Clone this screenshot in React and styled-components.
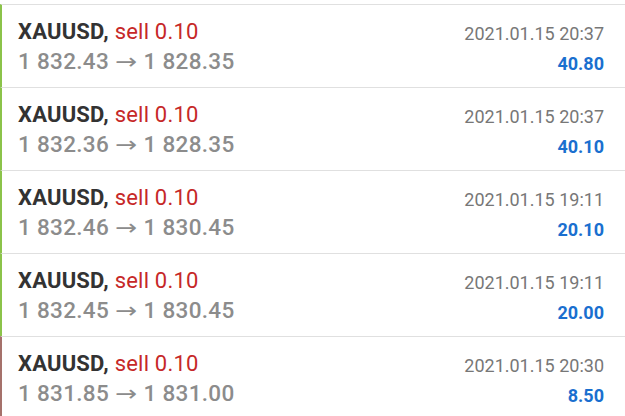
import styled, { createGlobalStyle } from "styled-components";

const GlobalStyle = createGlobalStyle`
  body {
    margin: 0;
    background: #ffffff;
    font-family: Roboto, "Liberation Sans", sans-serif;
  }
`;

const List = styled.div`
  padding-top: 4px;
  width: 625px;
  height: 416px;
  overflow: hidden;
`;

const Row = styled.div`
  display: flex;
  justify-content: space-between;
  height: 82px;
  border-top: 1px solid #e0e0e0;
  border-left: 2px solid ${(p) => (p.$loss ? "#a5716b" : "#8bc34a")};
  padding: 0 21px 0 16px;
  box-sizing: content-box;
`;

const Left = styled.div`
  display: flex;
  flex-direction: column;
  padding-top: 14px;
`;

const Title = styled.div`
  font-size: 22px;
  line-height: 26px;
  letter-spacing: 0.2px;
  color: #333333;
  font-weight: 700;
`;

const Side = styled.span`
  color: #c62828;
  font-weight: 400;
`;

const Prices = styled.div`
  font-size: 22.5px;
  line-height: 30px;
  margin-top: 1px;
  letter-spacing: 0.3px;
  color: #8c8c8c;
  font-weight: 500;
`;

const Arrow = styled.span`
  display: inline-block;
  font-family: "DejaVu Sans", sans-serif;
  font-weight: 400;
  font-size: 22px;
  color: #8c8c8c;
  margin: 0 2px;
  transform: scaleX(1.2);
`;

const Right = styled.div`
  display: flex;
  flex-direction: column;
  align-items: flex-end;
  padding-top: 17px;
`;

const Time = styled.div`
  font-size: 18px;
  line-height: 24px;
  color: #777777;
`;

const Profit = styled.div`
  font-size: 18px;
  line-height: 24px;
  margin-top: 6px;
  color: #1a6fcf;
  font-weight: 700;
`;

const deals = [
  { open: "1 832.43", close: "1 828.35", time: "2021.01.15 20:37", profit: "40.80" },
  { open: "1 832.36", close: "1 828.35", time: "2021.01.15 20:37", profit: "40.10" },
  { open: "1 832.46", close: "1 830.45", time: "2021.01.15 19:11", profit: "20.10" },
  { open: "1 832.45", close: "1 830.45", time: "2021.01.15 19:11", profit: "20.00" },
  { open: "1 831.85", close: "1 831.00", time: "2021.01.15 20:30", profit: "8.50", loss: true },
];

export default function App() {
  return (
    <>
      <GlobalStyle />
      <List>
        {deals.map((d, i) => (
          <Row key={i} $loss={d.loss}>
            <Left>
              <Title>
                XAUUSD, <Side>sell 0.10</Side>
              </Title>
              <Prices>
                {d.open} <Arrow>→</Arrow> {d.close}
              </Prices>
            </Left>
            <Right>
              <Time>{d.time}</Time>
              <Profit>{d.profit}</Profit>
            </Right>
          </Row>
        ))}
      </List>
    </>
  );
}
